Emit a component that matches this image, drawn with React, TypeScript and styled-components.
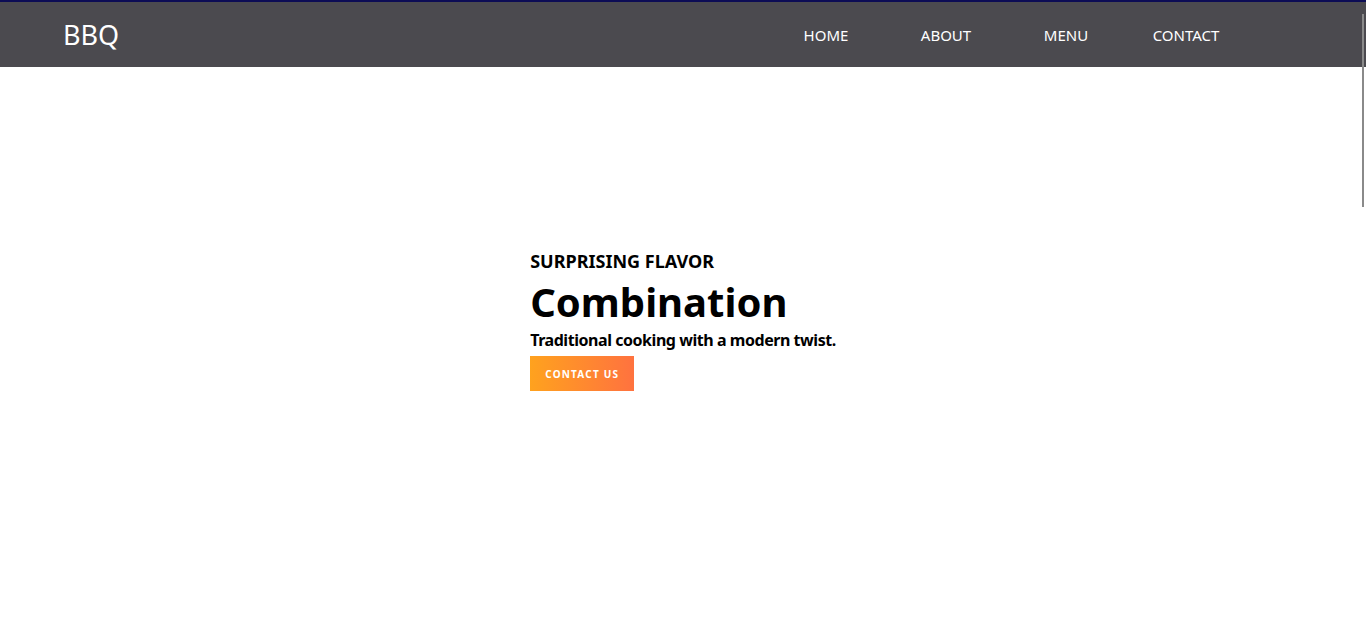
import React from "react";
import styled, { createGlobalStyle } from "styled-components";

const Global = createGlobalStyle`
  html, body { margin: 0; padding: 0; }
  body { font-family: "Noto Sans", "Open Sans", sans-serif; background: #fff; overflow: hidden; }
  * { box-sizing: border-box; }
`;

const Page = styled.div`
  position: relative;
  height: 636px;
`;

const Header = styled.header`
  position: absolute;
  top: 0;
  left: 0;
  right: 0;
  height: 67px;
  background: #4b4a4f;
  border-top: 2px solid #0c0c55;
  display: flex;
  align-items: center;
  justify-content: space-between;
  padding: 0 120px 0 63px;
  z-index: 2;
`;

const Logo = styled.div`
  color: #fff;
  font-size: 27px;
  line-height: 1;
  margin-top: -1px;
`;

const Nav = styled.ul`
  display: flex;
  list-style: none;
  margin: 0;
  padding: 0;
`;

const NavItem = styled.li`
  width: 120px;
  text-align: center;
  color: #fff;
  font-size: 15px;
`;

const Hero = styled.section`
  height: 636px;
  display: flex;
  align-items: center;
  justify-content: center;
`;

const HeroInner = styled.div`
  display: flex;
  flex-direction: column;
  align-items: flex-start;
  margin-top: 4px;
`;

const Kicker = styled.h3`
  margin: 0;
  font-size: 18px;
  font-weight: 700;
  line-height: 24px;
  color: #000;
`;

const Title = styled.h1`
  margin: 5px 0 0;
  font-size: 40px;
  font-weight: 700;
  line-height: 48px;
  color: #000;
`;

const Sub = styled.p`
  margin: 3px 0 0;
  font-size: 16px;
  font-weight: 700;
  line-height: 22px;
  letter-spacing: -0.45px;
  color: #000;
`;

const Button = styled.button`
  margin-top: 5px;
  width: 104px;
  height: 35px;
  padding: 0;
  border: none;
  background: linear-gradient(to right, #ffa21e, #ff723f);
  color: #fff;
  font-family: inherit;
  font-size: 10px;
  font-weight: 700;
  letter-spacing: 1.2px;
  cursor: pointer;
`;

const ScrollThumb = styled.div`
  position: absolute;
  top: 14px;
  right: 2px;
  width: 2px;
  height: 193px;
  background: #8a8a8a;
  z-index: 3;
`;

export default function App() {
  return (
    <Page>
      <Global />
      <Header>
        <Logo>BBQ</Logo>
        <Nav>
          <NavItem>HOME</NavItem>
          <NavItem>ABOUT</NavItem>
          <NavItem>MENU</NavItem>
          <NavItem>CONTACT</NavItem>
        </Nav>
      </Header>
      <Hero>
        <HeroInner>
          <Kicker>SURPRISING FLAVOR</Kicker>
          <Title>Combination</Title>
          <Sub>Traditional cooking with a modern twist.</Sub>
          <Button>CONTACT US</Button>
        </HeroInner>
      </Hero>
      <ScrollThumb />
    </Page>
  );
}
